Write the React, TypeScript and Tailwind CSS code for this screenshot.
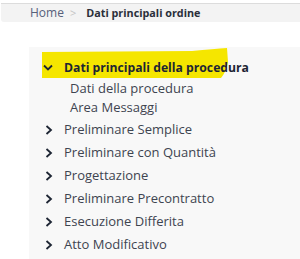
import React from "react";

const font = { fontFamily: '"Open Sans", "Noto Sans", sans-serif' };

function ChevronRight() {
  return (
    <svg width="8" height="10" viewBox="0 0 8 10" className="shrink-0">
      <polyline points="1.5,1 6,5 1.5,9" fill="none" stroke="#1d2533" strokeWidth="1.8" />
    </svg>
  );
}

function ChevronDown() {
  return (
    <svg width="10" height="7" viewBox="0 0 10 7" className="shrink-0">
      <polyline points="1,1.5 5,5.5 9,1.5" fill="none" stroke="#1d2533" strokeWidth="1.8" />
    </svg>
  );
}

const items = [
  "Preliminare Semplice",
  "Preliminare con Quantità",
  "Progettazione",
  "Preliminare Precontratto",
  "Esecuzione Differita",
  "Atto Modificativo",
];

export default function App() {
  return (
    <div className="w-[300px] h-[259px] bg-white overflow-hidden" style={font}>
      <div className="pt-[3px]">
        <div className="border-t border-[#dcdcdc] ml-[1px]">
          <div className="h-[18px] bg-[#f3f3f3] rounded-bl-[3px] flex items-center pl-[29px]">
            <span className="text-[12px] text-[#56607a]">Home</span>
            <span className="text-[11px] text-[#c4c4c4] ml-[6px] mr-[10px]">&gt;</span>
            <span className="text-[10.8px] font-bold text-[#2a2f3a]">Dati principali ordine</span>
          </div>
        </div>
      </div>
      <div className="mt-[25px] ml-[29px] bg-[#f8f8f8] h-[220px] pt-[10px]">
        <div className="relative h-[22px] flex items-center">
          <svg className="absolute left-[13px] top-[-9px]" width="190" height="31" viewBox="0 0 190 31">
            <path d="M0 4 L150 3 Q172 1 185 0 L186 14 Q184 24 179 30 L0 30 Z" fill="#f5e600" />
          </svg>
          <div className="relative flex items-center pl-[14px]">
            <ChevronDown />
            <span className="ml-[11px] text-[12.2px] font-bold text-[#1d2533]">Dati principali della procedura</span>
          </div>
        </div>
        <div className="h-[19px] flex items-center pl-[41px] text-[13px] text-[#3e4450]">Dati della procedura</div>
        <div className="h-[19px] flex items-center pl-[41px] text-[13px] text-[#3e4450]">Area Messaggi</div>
        <div className="mt-[1px]">
          {items.map((t) => (
            <div key={t} className="h-[23px] flex items-center pl-[16px]">
              <ChevronRight />
              <span className="ml-[11px] text-[13px] text-[#3e4450]">{t}</span>
            </div>
          ))}
        </div>
      </div>
    </div>
  );
}
